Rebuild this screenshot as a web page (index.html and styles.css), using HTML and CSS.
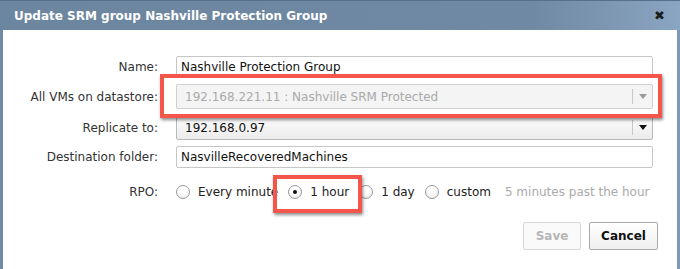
FILE: index.html
```html
<!DOCTYPE html>
<html>
<head>
<meta charset="utf-8">
<title>Update SRM group</title>
<link rel="stylesheet" href="styles.css">
</head>
<body>
<div class="dialog">
  <div class="titlebar">
    <span class="title">Update SRM group Nashville Protection Group</span>
    <span class="close">&#x2716;</span>
  </div>
  <div class="content">
    <div class="form">
      <div class="lbl">Name:</div>
      <div class="field text">Nashville Protection Group</div>

      <div class="lbl">All VMs on datastore:</div>
      <div class="field select disabled">
        <span class="val">192.168.221.11 : Nashville SRM Protected</span>
        <span class="arrow"></span>
      </div>

      <div class="lbl">Replicate to:</div>
      <div class="field select">
        <span class="val">192.168.0.97</span>
        <span class="arrow"></span>
      </div>

      <div class="lbl">Destination folder:</div>
      <div class="field text">NasvilleRecoveredMachines</div>

      <div class="lbl rpo-lbl">RPO:</div>
      <div class="radios">
        <span class="opt"><span class="radio"></span>Every minute</span>
        <span class="opt"><span class="radio on"></span>1 hour</span>
        <span class="opt"><span class="radio"></span>1 day</span>
        <span class="opt"><span class="radio"></span>custom</span>
        <span class="hint">5 minutes past the hour</span>
      </div>
    </div>
    <div class="actions">
      <button class="btn save" disabled>Save</button>
      <button class="btn cancel">Cancel</button>
    </div>
  </div>
  <div class="mark mark-ds"></div>
  <div class="mark mark-rpo"></div>
</div>
</body>
</html>
```

FILE: styles.css
```css
* { margin:0; padding:0; box-sizing:border-box; }
body { width:680px; height:269px; overflow:hidden; background:#fff; font:12px "DejaVu Sans", Verdana, sans-serif; color:#222; }

.dialog { position:relative; width:680px; height:269px; border-left:3px solid #7089a4; border-right:3px solid #7f9ab7; background:#fff; }

.titlebar { height:30px; margin-left:-3px; margin-right:-3px; border-top:1px solid #56708c; display:flex; align-items:center; justify-content:space-between; padding:0 15px 0 14px;
  background:linear-gradient(to right, #6d86a0 0%, #6f88a3 78%, #8aa5c2 100%); }
.title { color:#fff; font-weight:bold; font-size:12px; }
.close { color:#1d1d1d; font-size:13px; font-weight:bold; line-height:1; }

.content { padding-top:26px; }
.form { display:grid; grid-template-columns:155px 477px; column-gap:18px; row-gap:6px; align-items:center; }
.lbl { text-align:right; color:#333; white-space:nowrap; }

.field { height:22px; border:1px solid #c6c6c6; border-radius:2px; display:flex; align-items:center; padding-left:4px; color:#111; white-space:nowrap; }
.field.select { height:25px; padding-left:8px; position:relative; background:linear-gradient(#fdfdfd, #ececec); border-color:#b9b9b9; }
.field.select .val { flex:1; }
.field.select .arrow { width:20px; height:15px; border-left:1px solid #c8c8c8; margin:4px 0; position:relative; }
.field.select .arrow::after { content:""; position:absolute; left:6px; top:5px; border-left:4px solid transparent; border-right:4px solid transparent; border-top:5px solid #111; }
.field.disabled { background:#f4f4f4; border-color:#d0d0d0; color:#aaa; }
.field.disabled .arrow::after { border-top-color:#999; }

.rpo-lbl, .radios { margin-top:6px; height:24px; }
.rpo-lbl { line-height:24px; }
.radios { display:flex; align-items:center; white-space:nowrap; }
.opt { display:flex; align-items:center; margin-right:10px; color:#222; }
.radio { width:14px; height:14px; border:1px solid #9a9a9a; border-radius:50%; margin-right:8px; background:radial-gradient(circle at 50% 30%, #fff 40%, #e4e4e4 100%); position:relative; }
.radio.on::after { content:""; position:absolute; left:4px; top:4px; width:4px; height:4px; border-radius:50%; background:#111; }
.hint { color:#aaa; margin-left:4px; }

.actions { display:flex; justify-content:flex-end; gap:8px; padding-right:19px; margin-top:18px; }
.btn { height:28px; border:1px solid #bdbdbd; border-radius:2px; background:linear-gradient(#fff, #efefef); font:bold 12px "DejaVu Sans", Verdana, sans-serif; color:#111; }
.btn.save { width:58px; color:#b5b5b5; border-color:#d6d6d6; background:#fafafa; }
.btn.cancel { width:69px; border-color:#a9a9a9; }

.mark { position:absolute; border:4px solid #f4564b; box-shadow:1px 2px 3px rgba(0,0,0,0.45); }
.mark-ds { left:157px; top:74px; width:502px; height:44px; }
.mark-rpo { left:270px; top:175px; width:89px; height:38px; }
```
